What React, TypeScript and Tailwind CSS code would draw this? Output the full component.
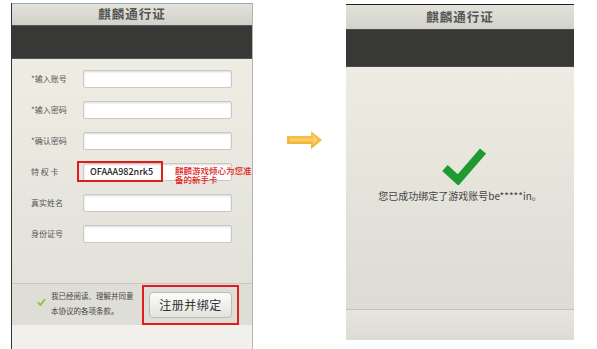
import React from 'react';

const font = { fontFamily: '"Noto Sans CJK SC", "Liberation Sans", sans-serif' };

const rows = [
  { label: '*输入账号', value: '' },
  { label: '*输入密码', value: '' },
  { label: '*确认密码', value: '' },
  { label: '特 权 卡', value: 'OFAAA982nrk5', highlight: true },
  { label: '真实姓名', value: '' },
  { label: '身份证号', value: '' },
];

function TitleBar({ h, top }: { h: string; top?: boolean }) {
  return (
    <div className={`${h} flex items-center justify-center bg-gradient-to-b from-[#e2e2da] to-[#d2d2ca] ${top ? 'border-t border-[#222]' : 'border-t border-[#9ab]'}`}>
      <span className="text-[12.5px] font-bold text-[#555] tracking-[1px]">麒麟通行证</span>
    </div>
  );
}

function RegisterPhone() {
  return (
    <div className="mt-[3px] ml-[11px] w-[242px] h-[346px] flex flex-col border-l border-[#333] border-r border-r-[#b5b5b0] bg-[#f1f0ec]">
      <TitleBar h="h-[22px]" />
      <div className="h-[34px] bg-[#383836] border-y border-[#555]" />
      {/* form */}
      <div className="h-[224px] bg-gradient-to-b from-[#efede3] to-[#e2e1da] pl-[19px] pt-[11px] flex flex-col gap-[13px]">
        {rows.map((r) => (
          <div key={r.label} className="flex items-center h-[18px]">
            <span className="w-[52px] text-[8px] text-[#555]">{r.label}</span>
            <div className="relative">
              <div className="w-[149px] h-[18px] rounded-[2px] bg-white border border-[#c9c9c2] shadow-[inset_0_1px_2px_rgba(0,0,0,0.15)] flex items-center">
                {r.value && <span className="ml-[6px] text-[9px] text-[#222] font-medium">{r.value}</span>}
              </div>
              {r.highlight && (
                <>
                  <div className="absolute left-[-6px] top-[-2px] w-[86px] h-[21px] border-2 border-[#e01c1c]" />
                  <div className="absolute left-[92px] top-[3px] w-[80px] text-[8.5px] leading-[9px] text-[#e01c1c] font-medium">
                    麒麟游戏倾心为您准备的新手卡
                  </div>
                </>
              )}
            </div>
          </div>
        ))}
      </div>
      {/* footer */}
      <div className="h-[42px] bg-[#dfded6] border-t border-[#c8c7bf] flex items-center">
        <svg width="9" height="8" viewBox="0 0 9 8" className="ml-[25px] mt-[-6px]">
          <path d="M1 4.5 L3.5 7 L8 1" stroke="#8cc63f" strokeWidth="2" fill="none" />
        </svg>
        <div className="ml-[5px] mt-[-3px] text-[7.5px] leading-[15px] text-[#444] w-[92px]">
          我已经阅读、理解并同意<br />本协议的各项条款。
        </div>
        <div className="relative ml-[6px]">
          <div className="absolute left-[-7px] top-[-7px] w-[97px] h-[40px] border-2 border-[#e01c1c]" />
          <div className="w-[83px] h-[26px] rounded-[4px] border border-[#bdbdb6] bg-gradient-to-b from-[#fbfbf9] to-[#e4e4de] flex items-center justify-center text-[12px] text-[#333] tracking-[0.5px]">
            注册并绑定
          </div>
        </div>
      </div>
      <div className="flex-1 bg-[#f1f0ec]" />
    </div>
  );
}

function Arrow() {
  return (
    <svg width="36" height="18" viewBox="0 0 36 18" className="mt-[131px] ml-[34px]">
      <defs>
        <linearGradient id="ar" x1="0" x2="0" y1="0" y2="1">
          <stop offset="0" stopColor="#f9c855" />
          <stop offset="1" stopColor="#f2ad2a" />
        </linearGradient>
      </defs>
      <polygon points="0,5 24,5 24,0 35,9 24,18 24,13 0,13" fill="url(#ar)" />
      <polygon points="3,7.5 26,7.5 26,4 31,9 26,14 26,10.5 3,10.5" fill="#fbd98a" opacity="0.7" />
    </svg>
  );
}

function SuccessPhone() {
  return (
    <div className="mt-[4px] ml-[23px] w-[228px] h-[336px] flex flex-col">
      <TitleBar h="h-[25px]" top />
      <div className="h-[38px] bg-[#383836] border-y border-[#4a4a48]" />
      <div className="h-[242px] bg-gradient-to-b from-[#eeece2] to-[#dcdbd4] flex flex-col items-center pt-[81px]">
        <svg width="44" height="37" viewBox="0 0 44 37" className="ml-[8px]">
          <path d="M3 20 L16 32 L41 3" stroke="#1f9a2e" strokeWidth="8" fill="none" />
        </svg>
        <div className="mt-[3px] text-[10px] text-[#444]">您已成功绑定了游戏账号be*****in。</div>
      </div>
      <div className="flex-1 bg-gradient-to-b from-[#e6e5df] to-[#dcdbd5] border-t border-[#c4c3bc]" />
    </div>
  );
}

export default function App() {
  return (
    <div className="w-[597px] h-[349px] bg-white flex overflow-hidden" style={font}>
      <RegisterPhone />
      <Arrow />
      <SuccessPhone />
    </div>
  );
}
